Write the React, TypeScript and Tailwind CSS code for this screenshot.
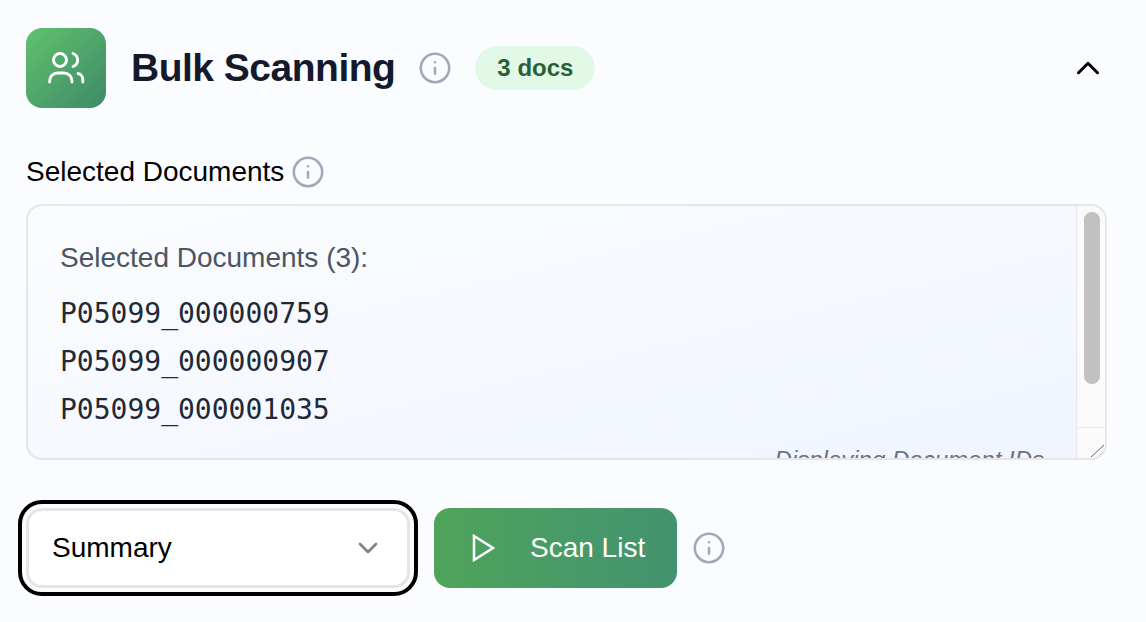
import { ChevronDown, ChevronUp, Info } from 'lucide-react'

const docs = ['P05099_000000759', 'P05099_000000907', 'P05099_000001035']

function Hint({ className = '' }: { className?: string }) {
  return <Info size={34} strokeWidth={1.8} className={`shrink-0 text-[#a3a8b8] ${className}`} />
}

function UsersIcon() {
  return (
    <svg width="40" height="40" viewBox="0 0 40 40" fill="none" stroke="white" strokeWidth="2.9" strokeLinecap="round" strokeLinejoin="round">
      <circle cx="14" cy="12" r="6.5" />
      <path d="M27 5.5a6.9 6.9 0 0 1 0 13" />
      <path d="M3.6 34v-1a8 8 0 0 1 8-8h6.4a8 8 0 0 1 8 8v1" />
      <path d="M32 25.5a6 6 0 0 1 4.8 6v2.5" />
    </svg>
  )
}

export default function App() {
  return (
    <div className="h-[622px] overflow-hidden bg-[#fbfcff] pt-[28px] pl-[26px] pr-[40px] font-['Liberation_Sans',sans-serif]">
      {/* Header */}
      <div className="flex h-[80px] items-center">
        <div className="flex h-[80px] w-[80px] items-center justify-center rounded-[16px] bg-gradient-to-br from-[#60c26c] to-[#3f8a68]">
          <UsersIcon />
        </div>
        <h1 className="ml-[25px] text-[39px] font-bold tracking-[-0.5px] text-[#141a2b]">Bulk Scanning</h1>
        <Hint className="ml-[23px]" />
        <span className="ml-[23px] flex h-[44px] w-[120px] items-center justify-center rounded-full bg-[#e3f9e7] text-[24px] font-bold text-[#2a6035]">
          3 docs
        </span>
        <ChevronUp size={38} strokeWidth={1.9} className="ml-auto mr-[-1px] text-black" />
      </div>

      {/* Selected documents */}
      <div className="mt-[46px] flex h-[36px] items-center text-[28px] text-black">
        Selected Documents
        <Hint className="ml-[7px]" />
      </div>
      <div className="mt-[14px] flex h-[256px] w-[1081px] overflow-hidden rounded-[16px] border-2 border-[#e4e6eb] bg-gradient-to-br from-[#fbfcfe] to-[#f0f5fe]">
        <div className="relative flex-1 pl-[32px] pt-[34px]">
          <p className="text-[28px] leading-[36px] text-[#4b5563]">Selected Documents (3):</p>
          <div className="mt-[14px] font-['DejaVu_Sans_Mono',monospace] text-[28px] leading-[48px] text-[#1f2937]">
            {docs.map(id => (
              <div key={id}>{id}</div>
            ))}
          </div>
          <p className="absolute right-[32px] top-[239px] text-[24px] italic leading-[30px] text-[#6b7280]">Displaying Document IDs</p>
        </div>
        <div className="flex w-[29px] flex-col border-l border-[#e8e8e8] bg-[#fafafa]">
          <div className="ml-[7px] mt-[6px] h-[172px] w-[16px] rounded-full bg-[#c1c1c1]" />
          <div className="mt-auto flex h-[31px] items-end justify-end border-t border-[#e8e8e8]">
            <svg width="16" height="16" viewBox="0 0 16 16" fill="none" stroke="#666" strokeWidth="1">
              <path d="M2 15 15 3" />
              <path d="M9 15 15 9" />
            </svg>
          </div>
        </div>
      </div>

      {/* Actions */}
      <div className="mt-[48px] flex items-center">
        <div className="flex h-[80px] w-[384px] items-center justify-between rounded-[16px] border-[3px] border-[#e5e5e5] bg-white pl-[23px] pr-[23px] text-[28px] text-black outline-[4px] outline-offset-[4px] outline-black">
          Summary
          <ChevronDown size={32} strokeWidth={2} className="text-[#80838a]" />
        </div>
        <button className="ml-[24px] flex h-[80px] w-[243px] items-center rounded-[16px] bg-gradient-to-r from-[#4fa45a] to-[#43926f] pl-[38px] text-[28px] text-white">
          <svg width="24" height="28" viewBox="0 0 24 28" fill="none" stroke="white" strokeWidth="2.5" strokeLinejoin="miter">
            <path d="M2 2 21 14 2 26Z" />
          </svg>
          <span className="ml-[34px]">Scan List</span>
        </button>
        <Hint className="ml-[15px]" />
      </div>
    </div>
  )
}
